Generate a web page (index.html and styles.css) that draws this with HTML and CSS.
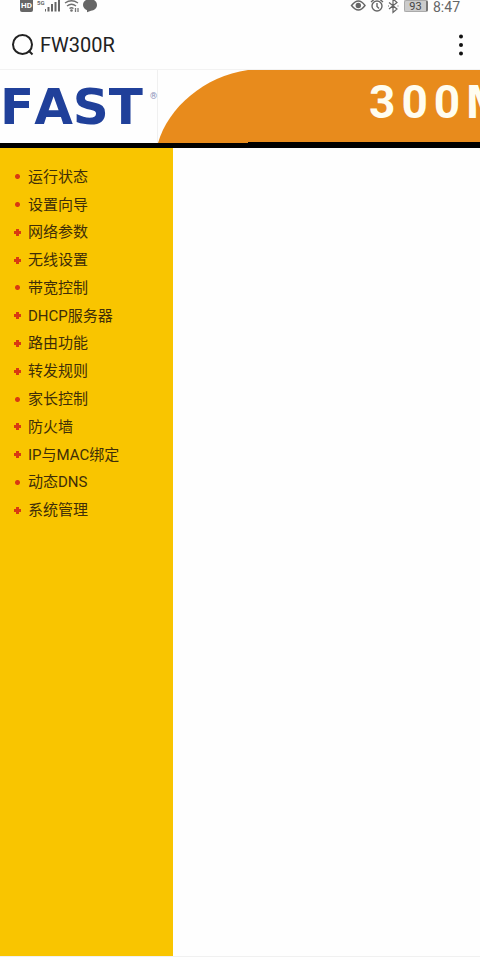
FILE: index.html
```html
<!DOCTYPE html>
<html lang="zh-CN">
<head>
<meta charset="utf-8">
<meta name="viewport" content="width=device-width, initial-scale=1">
<title>FW300R</title>
<link rel="stylesheet" href="styles.css">
</head>
<body>
<div class="status">
  <div class="status-left">
    <span class="hd">HD</span>
    <span class="net">5G</span>
    <svg width="55" height="14" viewBox="0 0 55 14" aria-hidden="true">
      <path d="M2 11.500V9M5.500 11.500V7M9 11.500V4M12.500 11.500V2M16 11.500V0" transform="translate(-2 0)" fill="none" stroke="#666" stroke-width="2"/>
      <path d="M20 3q6.500-4.500 13 0M22 6q4.500-3.500 9 0M24.500 8.500q2-1.500 4 0" fill="none" stroke="#707070" stroke-width="1.400"/>
      <circle cx="26.500" cy="10.500" r="1.300" fill="#707070"/>
      <path d="M30.500 8v4M33 8v4" stroke="#777" stroke-width="1.300"/>
      <path d="M45 -1c4 0 7 2.500 7 6s-3 5.500-6 5.700l-4 1.500v-2c-2.500-1-4-3-4-5.200c0-3.500 3-6 7-6z" fill="#666"/>
    </svg>
  </div>
  <div class="status-right">
    <svg width="49" height="14" viewBox="0 0 49 14" fill="none" stroke="#666" stroke-width="1.400" aria-hidden="true">
      <path d="M1.500 5.500Q8.500-3.500 15 5.500Q8.500 14.500 1.500 5.500z"/>
      <circle cx="8.300" cy="5.500" r="2" fill="#666"/>
      <circle cx="27" cy="6" r="5"/>
      <path d="M27 3v3.500l2 2M21 2l3-2.500M33 2l-3-2.500"/>
      <path d="M39 2.500l8 6.500-4 3.500V-1l4 3.500-8 6.500M38 6h1M47.500 6h1" stroke-width="1.200"/>
    </svg>
    <span class="battery">93</span>
    <time class="clock">8:47</time>
  </div>
</div>

<header class="appbar">
  <svg width="24" height="24" viewBox="0 0 24 24" fill="none" stroke="#222" stroke-width="2" aria-hidden="true">
    <circle cx="11.500" cy="11.500" r="9.500"/><path d="M17.500 17.500l4 4"/>
  </svg>
  <h1 class="title">FW300R</h1>
  <button class="more" type="button" aria-label="更多">
    <svg width="6" height="22" viewBox="0 0 6 22" fill="#111"><circle cx="3" cy="2.500" r="2"/><circle cx="3" cy="11" r="2"/><circle cx="3" cy="19.500" r="2"/></svg>
  </button>
</header>

<div class="banner">
  <div class="brand"><span class="logo">FAST</span><sup class="reg">®</sup></div>
  <div class="hero">
    <svg class="curve" width="90" height="73" viewBox="0 0 90 73" aria-hidden="true"><path d="M0 73C10 38 46 6 90 0V73z" fill="#e88b1c"/></svg>
    <div class="model">300M</div>
  </div>
</div>

<div class="page">
  <nav class="sidebar">
    <ul class="menu">
      <li><a class="leaf" href="#">运行状态</a></li>
      <li><a class="leaf" href="#">设置向导</a></li>
      <li><a class="group" href="#">网络参数</a></li>
      <li><a class="group" href="#">无线设置</a></li>
      <li><a class="leaf" href="#">带宽控制</a></li>
      <li><a class="group" href="#">DHCP服务器</a></li>
      <li><a class="group" href="#">路由功能</a></li>
      <li><a class="group" href="#">转发规则</a></li>
      <li><a class="leaf" href="#">家长控制</a></li>
      <li><a class="group" href="#">防火墙</a></li>
      <li><a class="group" href="#">IP与MAC绑定</a></li>
      <li><a class="leaf" href="#">动态DNS</a></li>
      <li><a class="group" href="#">系统管理</a></li>
    </ul>
  </nav>
  <main class="content"></main>
</div>
</body>
</html>
```

FILE: styles.css
```css
* { box-sizing: border-box; }

body {
  margin: 0;
  min-height: 100vh;
  display: flex;
  flex-direction: column;
  overflow-x: hidden;
  background: #fefefe;
  color: #222;
  font-family: Roboto, "Noto Sans CJK SC", sans-serif;
}

.status {
  display: flex;
  justify-content: space-between;
  height: 20px;
  padding: 0 20px;
}

.status-left {
  display: flex;
  align-items: flex-start;
}

.hd {
  width: 13px;
  height: 12px;
  margin-right: 4px;
  border-radius: 0 0 2px 2px;
  background: #666;
  color: #fff;
  font-size: 8px;
  font-weight: 700;
  line-height: 12px;
  text-align: center;
}

.net {
  width: 8px;
  color: #666;
  font-size: 6px;
  font-weight: 700;
  line-height: 6px;
}

.status-right {
  display: flex;
  align-items: flex-start;
  gap: 5px;
  color: #666;
}

.battery {
  width: 24px;
  height: 12px;
  border: 1px solid #aaa;
  border-right: 2px solid #777;
  border-radius: 2px;
  background: #ccc;
  color: #444;
  font-size: 11px;
  line-height: 11px;
  text-align: center;
}

.clock {
  font-size: 14px;
  line-height: 14px;
}

.appbar {
  display: flex;
  align-items: center;
  gap: 5px;
  height: 49px;
  padding: 0 12px 0 11px;
}

.title {
  flex: 1;
  margin: 0;
  font-size: 20px;
  font-weight: 400;
  line-height: 24px;
}

.more {
  display: flex;
  padding: 0 4px;
  border: 0;
  background: none;
}

.banner {
  display: flex;
  height: 79px;
  border-top: 1px solid #f2f2f2;
  border-bottom: 5px solid #000;
  overflow: hidden;
}

.brand {
  display: flex;
  flex: none;
  justify-content: space-between;
  width: 158px;
  border-right: 1px solid #f0f0f0;
  color: #20409a;
}

.logo {
  font: 700 50px/74px "DejaVu Sans", sans-serif;
  font-kerning: none;
}

.reg {
  padding-top: 21px;
  color: #8790b8;
  font-size: 9px;
  line-height: 10px;
}

.hero {
  display: flex;
  flex: 1;
  min-width: 0;
}

.curve { flex: none; }

.model {
  flex: 1;
  min-width: 0;
  padding-left: 121px;
  border-bottom: 1px solid #000;
  background: #e88b1c;
  color: #fffdf0;
  font-size: 46px;
  font-weight: 700;
  letter-spacing: 6px;
  line-height: 64px;
  white-space: nowrap;
}

.page {
  display: flex;
  flex: 1;
  margin-bottom: 3px;
  border-bottom: 1px solid #f0f0f0;
}

.sidebar {
  width: 36%;
  padding: 15px 0 0 13px;
  background: #f9c500;
}

.menu {
  display: grid;
  grid-auto-rows: 1fr;
  height: 361px;
  margin: 0;
  padding: 0;
  list-style: none;
}

.menu li {
  display: flex;
  align-items: center;
}

.menu a {
  display: flex;
  align-items: center;
  gap: 6px;
  color: #3f2e08;
  font-size: 15px;
  line-height: 20px;
  text-decoration: none;
}

.menu a::before {
  content: "";
  width: 9px;
  height: 9px;
}

.leaf::before {
  background: radial-gradient(circle, #d83a12 2px, transparent 3px);
}

.group::before {
  background:
    linear-gradient(#d83a12, #d83a12) center / 7px 3px no-repeat,
    linear-gradient(#d83a12, #d83a12) center / 3px 7px no-repeat;
}

.content { flex: 1; }
```
